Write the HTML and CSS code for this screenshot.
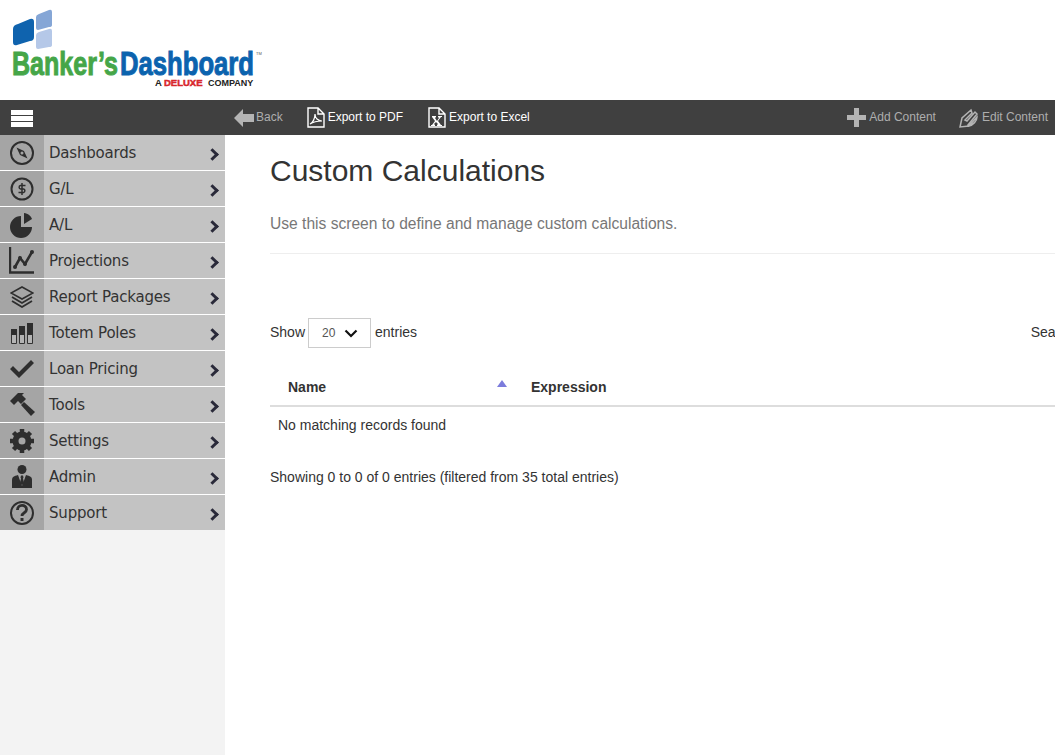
FILE: index.html
```html
<!DOCTYPE html>
<html lang="en">
<head>
  <meta charset="UTF-8" />
  <title>Custom Calculations</title>
  <link rel="stylesheet" href="styles.css">
</head>
<body>
  <header class="logo-bar">
    <svg class="logo" width="270" height="100" viewBox="0 0 270 100">
      <path d="M18 24 L30 19 Q34 18 34 22 V37 Q34 41 30 41 L17 45 Q13 46 13 42 V29 Q13 25 18 24Z" fill="#0f63ae"/>
      <path d="M39 14 L49 10 Q52 9 52 12 V25 Q52 27 49 27 L38 30 Q36 30 36 28 V17 Q36 15 39 14Z" fill="#85a6d6"/>
      <path d="M39 32 L49 29 Q52 28 52 31 V45 Q52 47 49 47 L38 49 Q36 49 36 47 V35 Q36 33 39 32Z" fill="#b5c8e8"/>
      <text class="logo-word" transform="translate(12 75) scale(.738 1)" fill="#45a648" stroke="#45a648">Banker’s</text>
      <text class="logo-word" transform="translate(120 75) scale(.755 1)" fill="#0b63ae" stroke="#0b63ae">Dashboard</text>
      <text class="logo-tm" x="256" y="55" fill="#555">TM</text>
      <text class="logo-sub" x="155" y="86" fill="#222">A</text>
      <text class="logo-sub logo-red" x="164" y="86" fill="#d8262c" stroke="#d8262c">DELUXE</text>
      <text class="logo-sub" transform="translate(208 86) scale(.95 1)" fill="#222">COMPANY</text>
    </svg>
  </header>

  <div class="toolbar">
    <div class="menu-toggle">
      <svg width="22" height="18" viewBox="0 0 22 18"><path d="M0 0h22v5H0zM0 6h22v5H0zM0 12h22v5H0z" fill="#fff"/></svg>
    </div>
    <div class="tool-group">
      <a class="tool tool-off tool-back">
        <svg width="20" height="18" viewBox="0 0 20 18"><path d="M0 9 9 0v5h11v8H9v5z" fill="#b4b4b4"/></svg>
        <span>Back</span>
      </a>
      <a class="tool">
        <svg width="18" height="21" viewBox="0 0 18 21"><path d="M1 1h10l6 6v13H1z M11 1v6h6" fill="none" stroke="#fff" stroke-width="1.4"/><path d="M3 17c3-1 5-6 5-10 0 4 3 7 7 7-4 0-9 1-12 3z" fill="none" stroke="#fff" stroke-width="1.2"/></svg>
        <span>Export to PDF</span>
      </a>
      <a class="tool tool-excel">
        <svg width="18" height="21" viewBox="0 0 18 21"><path d="M1 1h10l6 6v13H1z M11 1v6h6" fill="none" stroke="#fff" stroke-width="1.4"/><path d="M4 9h4v1L7 11l2 3 2-3-1-1V9h4v1h-1l-3 4 3 4h1v1H9v-1l1-1-2-2-2 2 1 1v1H3v-1h1l3-4-3-4z" fill="#fff"/></svg>
        <span>Export to Excel</span>
      </a>
    </div>
    <div class="tool-group tool-right">
      <a class="tool tool-off">
        <svg width="19" height="19" viewBox="0 0 19 19"><path d="M7 0h5v7h7v5h-7v7H7v-7H0V7h7z" fill="#b4b4b4"/></svg>
        <span>Add Content</span>
      </a>
      <a class="tool tool-off">
        <svg width="20" height="20" viewBox="0 0 20 20"><path d="M1 19 3 10 12 2l1 3-7 7 2 1 8-9 2 2-9 11 1 1 8-9c0 4-4 8-8 9z" fill="none" stroke="#b4b4b4" stroke-width="1.5"/></svg>
        <span>Edit Content</span>
      </a>
    </div>
  </div>

  <div class="layout">
    <aside class="sidebar">
      <ul class="side-menu">
        <li>
          <span class="side-icon"><svg width="26" height="26" viewBox="0 0 26 26"><circle cx="13" cy="13" r="11" fill="none" stroke="#2e2e2e" stroke-width="2"/><path d="M7.500 7.500 15 11l3.500 7.500L11 15z" fill="#2e2e2e"/><circle cx="13" cy="13" r="1.500" fill="#a5a5a5"/></svg></span>
          <span class="side-label">Dashboards</span><span class="side-arrow"></span>
        </li>
        <li>
          <span class="side-icon"><svg width="24" height="24" viewBox="0 0 24 24"><circle cx="12" cy="12" r="10.500" fill="none" stroke="#2e2e2e" stroke-width="2"/><path d="M15.500 8.500H10.500a1.800 1.800 0 0 0 0 3.500h3a1.800 1.800 0 0 1 0 3.500H8.500M12 6v12" fill="none" stroke="#2e2e2e" stroke-width="1.500"/></svg></span>
          <span class="side-label">G/L</span><span class="side-arrow"></span>
        </li>
        <li>
          <span class="side-icon"><svg width="24" height="26" viewBox="0 0 24 26"><path d="M11 4A11 11 0 1 0 22 15H11z" fill="#2e2e2e"/><path d="M14 1c4 .5 7 3 8 6l-8 5z" fill="#2e2e2e"/></svg></span>
          <span class="side-label">A/L</span><span class="side-arrow"></span>
        </li>
        <li>
          <span class="side-icon"><svg width="26" height="27" viewBox="0 0 26 27"><path d="M1 0v25.500h24" fill="none" stroke="#2e2e2e" stroke-width="2.400"/><path d="M6 20l5-9 5 6 7-12" fill="none" stroke="#2e2e2e" stroke-width="2.600"/><circle cx="6" cy="20" r="2" fill="#2e2e2e"/><circle cx="11" cy="11" r="2" fill="#2e2e2e"/><circle cx="16" cy="17" r="2" fill="#2e2e2e"/><circle cx="23" cy="5" r="2" fill="#2e2e2e"/></svg></span>
          <span class="side-label">Projections</span><span class="side-arrow"></span>
        </li>
        <li>
          <span class="side-icon"><svg width="24" height="22" viewBox="0 0 24 22"><path d="M12 1 23 7 12 13 1 7z" fill="none" stroke="#2e2e2e" stroke-width="1.600"/><path d="M2 11l10 6 10-6M2 15l10 6 10-6" fill="none" stroke="#2e2e2e" stroke-width="1.800"/></svg></span>
          <span class="side-label">Report Packages</span><span class="side-arrow"></span>
        </li>
        <li>
          <span class="side-icon"><svg width="22" height="22" viewBox="0 0 22 22"><path d="M.5 7.500h5v14h-5zM8.500 4.500h5v17h-5zM16.500 1.500h5v20h-5z" fill="#b4b4b4" stroke="#333"/><path d="M0 7h6v6H0zM8 4h6v9H8zM16 1h6v12h-6z" fill="#2e2e2e"/></svg></span>
          <span class="side-label">Totem Poles</span><span class="side-arrow"></span>
        </li>
        <li>
          <span class="side-icon"><svg width="24" height="18" viewBox="0 0 24 18"><path d="M0 9l3-3 6 6L21 0l3 3L9 18z" fill="#2e2e2e"/></svg></span>
          <span class="side-label">Loan Pricing</span><span class="side-arrow"></span>
        </li>
        <li>
          <span class="side-icon"><svg width="25" height="23" viewBox="0 0 25 23"><path d="M0 8 8 0h6l-2 2 4 4-5 5-3-3-4 4z" fill="#2e2e2e"/><path d="M14 9l-3 3 10 11 4-4z" fill="#2e2e2e"/></svg></span>
          <span class="side-label">Tools</span><span class="side-arrow"></span>
        </li>
        <li>
          <span class="side-icon"><svg width="24" height="24" viewBox="0 0 24 24"><circle cx="12" cy="12" r="6.500" fill="none" stroke="#2e2e2e" stroke-width="6"/><path d="M12 0v24M0 12h24M3.500 3.500l17 17M20.500 3.500l-17 17" stroke="#2e2e2e" stroke-width="4.500"/><circle cx="12" cy="12" r="3.500" fill="#a5a5a5"/></svg></span>
          <span class="side-label">Settings</span><span class="side-arrow"></span>
        </li>
        <li>
          <span class="side-icon"><svg width="20" height="23" viewBox="0 0 20 23"><circle cx="10" cy="4.500" r="4.500" fill="#2e2e2e"/><path d="M0 23v-8c0-3 2-4 6-5h8c4 1 6 2 6 5v8z" fill="#2e2e2e"/><path d="M6 10h8l-4 11z" fill="#a5a5a5"/><path d="M9 10.500h2l.5 2-.5 1 1 4-2 3-2-3 1-4-.5-1z" fill="#2e2e2e"/></svg></span>
          <span class="side-label">Admin</span><span class="side-arrow"></span>
        </li>
        <li>
          <span class="side-icon"><svg width="26" height="26" viewBox="0 0 26 26"><circle cx="13" cy="13" r="11" fill="none" stroke="#2e2e2e" stroke-width="2"/><path d="M8.500 10c0-6 9-6 9-.5 0 3.500-4.500 3-4.500 6.500" fill="none" stroke="#2e2e2e" stroke-width="2.800"/><path d="M11.500 18h3v3h-3z" fill="#2e2e2e"/></svg></span>
          <span class="side-label">Support</span><span class="side-arrow"></span>
        </li>
      </ul>
    </aside>

    <main class="content">
      <h1>Custom Calculations</h1>
      <p class="lead">Use this screen to define and manage custom calculations.</p>
      <hr>

      <div class="table-controls">
        <div class="entries">
          <span class="control-text">Show</span>
          <span class="select-box">20
            <svg width="14" height="9" viewBox="0 0 14 9"><path d="M1.500 1.500 7 7l5.500-5.500" fill="none" stroke="#111" stroke-width="2.200"/></svg>
          </span>
          <span class="control-text">entries</span>
        </div>
        <div class="search"><span class="control-text">Search:</span> <span class="search-box"></span></div>
      </div>

      <table class="data-table">
        <thead>
          <tr>
            <th class="col-name">Name<span class="sort-up"></span></th>
            <th>Expression</th>
          </tr>
        </thead>
        <tbody>
          <tr><td colspan="2">No matching records found</td></tr>
        </tbody>
      </table>

      <div class="table-info">Showing 0 to 0 of 0 entries (filtered from 35 total entries)</div>
    </main>
  </div>
</body>
</html>
```

FILE: styles.css
```css
html, body {
  height: 100%;
}
body {
  margin: 0;
  font-family: "Liberation Sans", Arial, sans-serif;
  color: #333;
  background: #fff;
  overflow: hidden;
}
.logo-bar {
  height: 100px;
}
.logo {
  display: block;
}
.logo-word {
  font-family: "Liberation Sans", sans-serif;
  font-weight: bold;
  font-size: 34px;
  stroke-width: 1px;
}
.logo-tm {
  font-family: "Liberation Sans", sans-serif;
  font-size: 4px;
}
.logo-sub {
  font-family: "Liberation Sans", sans-serif;
  font-weight: bold;
  font-size: 9.5px;
}
.logo-red {
  stroke-width: 0.5px;
}

.toolbar {
  display: flex;
  align-items: center;
  height: 35px;
  background: #404040;
  font-size: 12px;
  color: #fff;
}
.menu-toggle {
  width: 225px;
  padding-left: 11px;
  padding-top: 2px;
  box-sizing: border-box;
  display: flex;
}
.tool-group {
  display: flex;
  align-items: center;
  gap: 24px;
  padding-left: 9px;
}
.tool-right {
  margin-left: auto;
  padding-right: 7px;
  gap: 23px;
}
.tool {
  display: flex;
  align-items: center;
  gap: 3px;
}
.tool span {
  padding-bottom: 2px;
}
.tool-off {
  color: #aeaeae;
}
.tool-back {
  gap: 2px;
}
.tool-excel {
  margin-left: 1px;
}

.layout {
  display: flex;
  height: calc(100% - 135px);
}
.sidebar {
  flex: none;
  width: 225px;
  background: #f3f3f3;
}
.side-menu {
  list-style: none;
  margin: 0;
  padding: 0;
}
.side-menu li {
  display: flex;
  align-items: center;
  height: 35px;
  background: #c3c3c3;
  border-bottom: 1px solid #fff;
  font-family: "DejaVu Sans", Verdana, sans-serif;
  font-size: 15px;
  letter-spacing: -0.2px;
  color: #333;
}
.side-menu li:last-child {
  border-bottom: 0;
}
.side-icon {
  flex: none;
  width: 44px;
  height: 100%;
  background: #a5a5a5;
  display: flex;
  align-items: center;
  justify-content: center;
}
.side-label {
  flex: 1;
  padding-left: 5px;
}
.side-arrow {
  flex: none;
  width: 6px;
  height: 6px;
  margin-right: 8px;
  margin-top: 3px;
  border-top: 3.5px solid #2a2a3a;
  border-right: 3.5px solid #2a2a3a;
  transform: rotate(45deg);
}

.content {
  flex: none;
  width: 985px;
  padding-left: 45px;
  font-size: 14px;
  color: #333;
}
h1 {
  margin: 19px 0 0;
  font-size: 30px;
  font-weight: normal;
  line-height: 34px;
}
.lead {
  margin: 26px 0 0;
  font-size: 15.6px;
  line-height: 20px;
  color: #777;
}
hr {
  margin: 19px 0 0;
  border: 0;
  border-top: 1px solid #eee;
}
.table-controls {
  display: flex;
  justify-content: space-between;
  align-items: center;
  margin-top: 64px;
}
.control-text {
  padding-bottom: 2px;
}
.entries {
  display: flex;
  align-items: center;
  gap: 3px;
}
.select-box {
  display: flex;
  align-items: center;
  justify-content: space-between;
  box-sizing: border-box;
  width: 63px;
  height: 30px;
  margin-right: 1px;
  padding: 0 12px 0 13px;
  border: 1px solid #ccc;
  font-size: 12px;
  color: #555;
}
.search {
  display: flex;
  align-items: center;
  gap: 4px;
}
.search-box {
  display: block;
  width: 170px;
  height: 28px;
  border: 1px solid #ccc;
}
.data-table {
  width: 100%;
  margin-top: 20px;
  border-collapse: collapse;
}
.data-table th {
  position: relative;
  height: 37px;
  padding: 0 18px;
  border-bottom: 2px solid #ddd;
  text-align: left;
  font-weight: bold;
}
.col-name {
  width: 207px;
}
.sort-up {
  position: absolute;
  top: 12px;
  right: 6px;
  border-left: 5px solid transparent;
  border-right: 5px solid transparent;
  border-bottom: 7px solid #7c7cdc;
}
.data-table td {
  padding: 10px 8px;
  line-height: 17px;
}
.table-info {
  margin-top: 25px;
  line-height: 17px;
}
```
